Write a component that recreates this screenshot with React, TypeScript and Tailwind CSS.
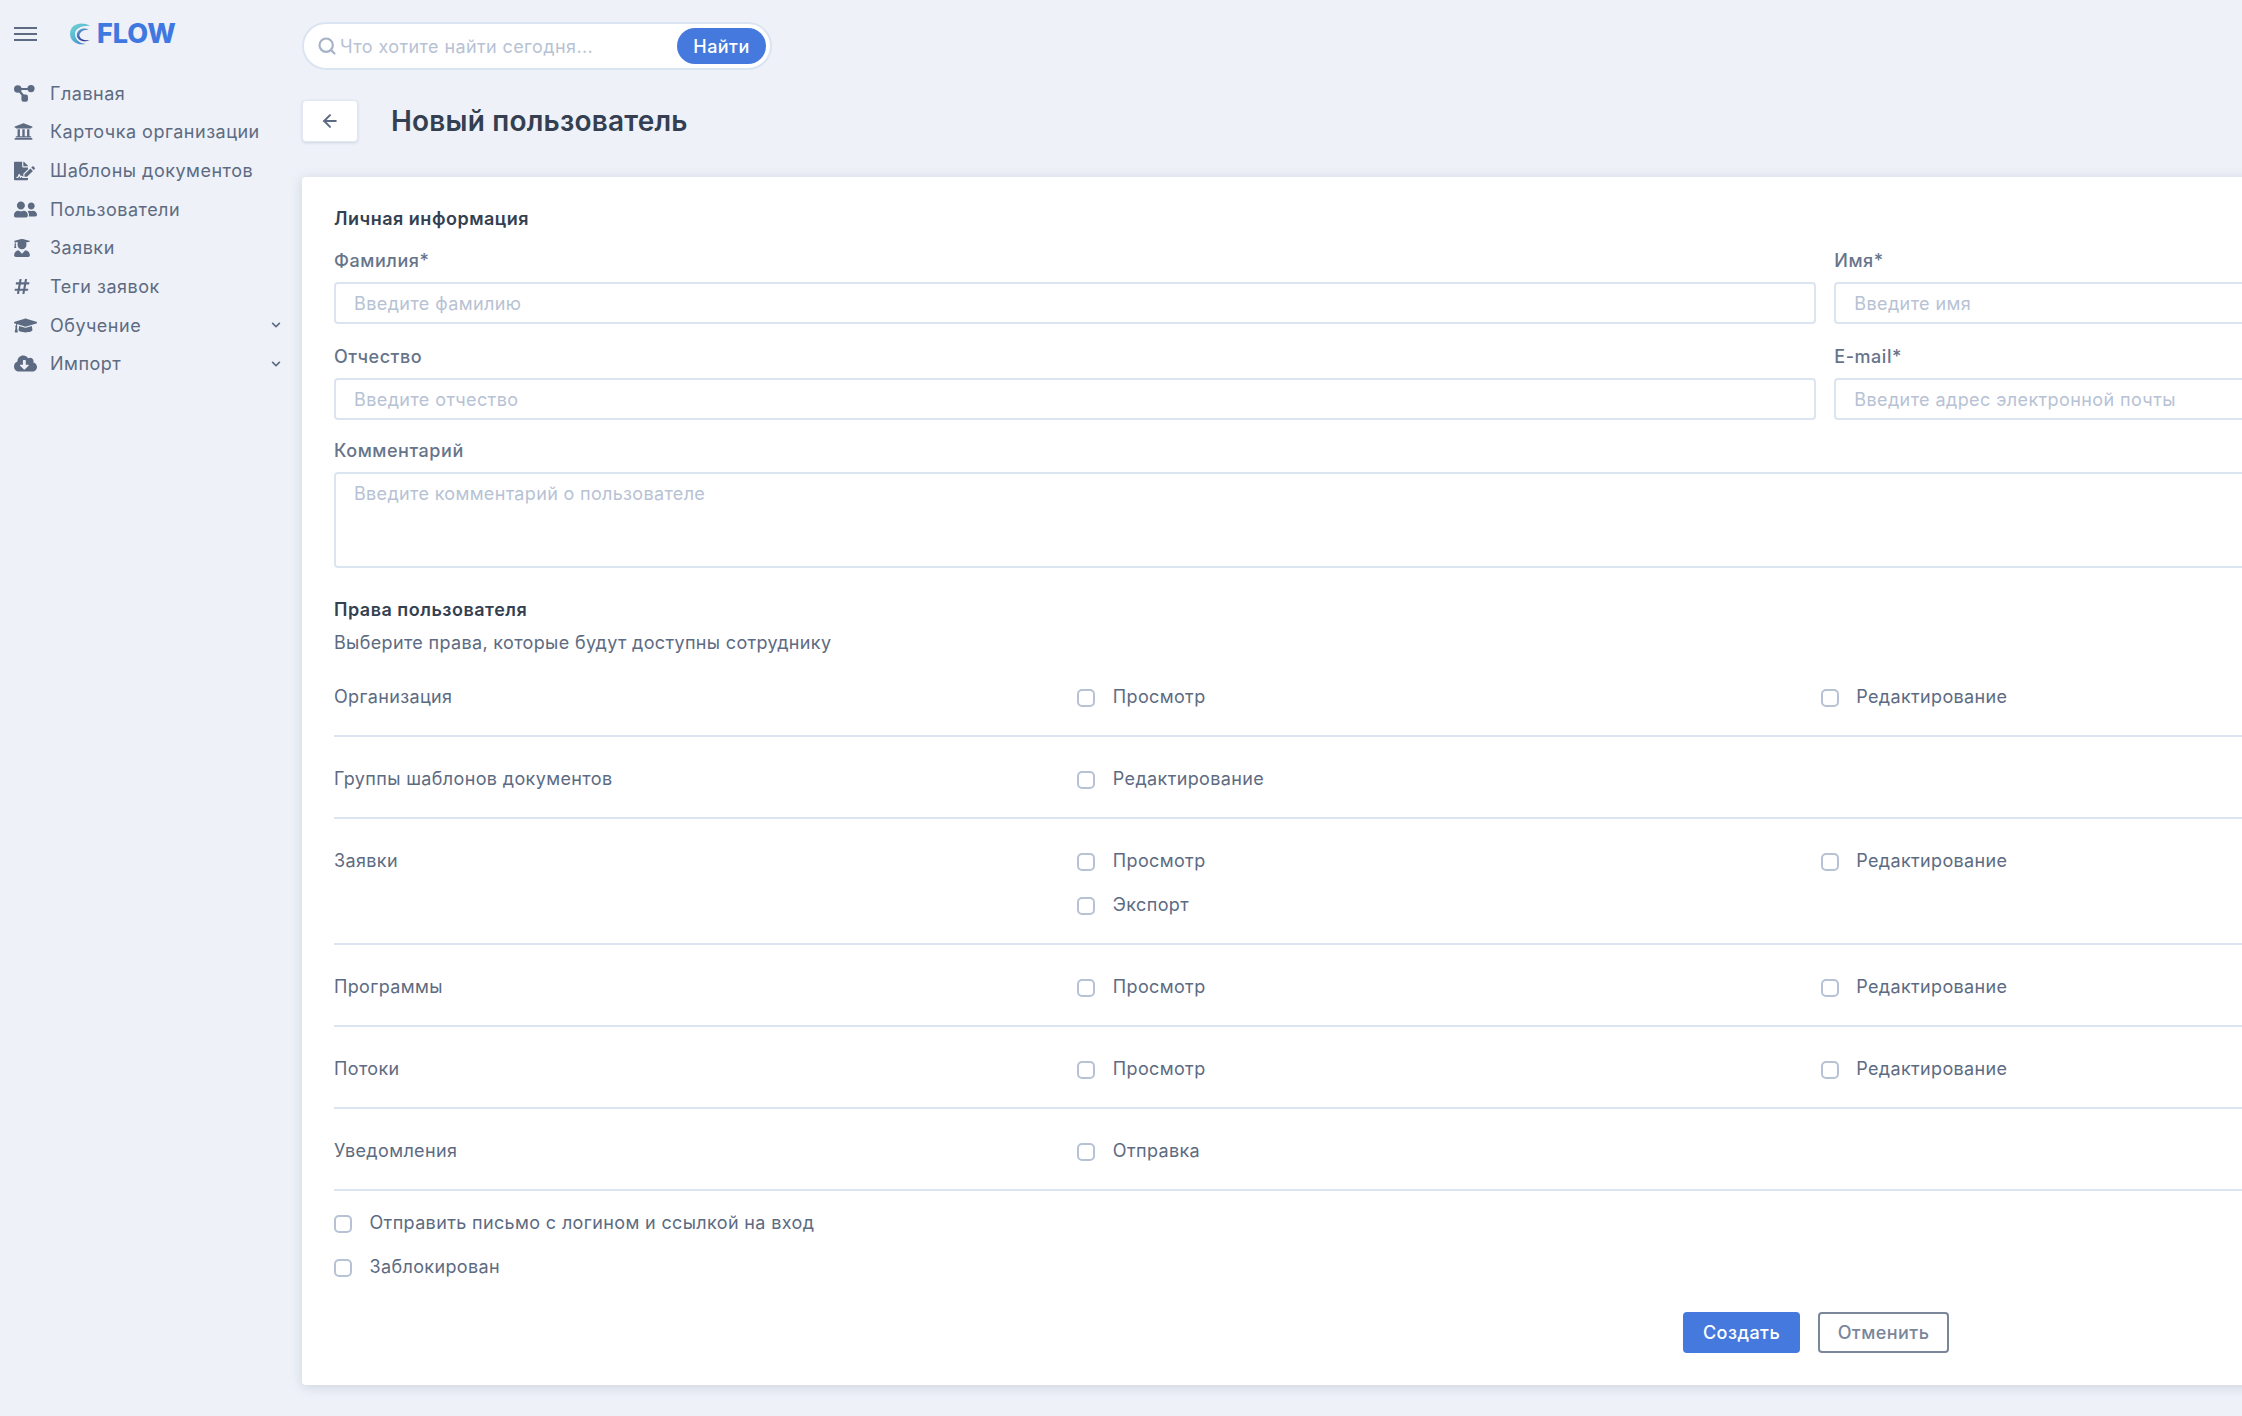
import { ReactNode } from 'react'
import {
  FaUniversity,
  FaFileSignature,
  FaUserFriends,
  FaUserGraduate,
  FaHashtag,
  FaGraduationCap,
  FaCloudDownloadAlt,
  FaChevronDown,
} from 'react-icons/fa'
import { Search, ArrowLeft } from 'lucide-react'

const fontClass = "font-['Inter',sans-serif]"

function NodesIcon({ className }: { className?: string }) {
  return (
    <svg className={className} viewBox="0 0 21 17">
      <path d="M4 4H17M4 4L10.5 12.5" stroke="#5d6b82" strokeWidth="2.2" fill="none" />
      <circle cx="3.8" cy="4" r="3.8" />
      <circle cx="17" cy="3.6" r="3.6" />
      <rect x="7.4" y="9.6" width="6.6" height="7.2" rx="2.2" />
    </svg>
  )
}

const menu = [
  { label: 'Главная', Icon: NodesIcon, size: 'h-[17px] w-[21px]' },
  { label: 'Карточка организации', Icon: FaUniversity, size: 'h-[19px] w-[19px]' },
  { label: 'Шаблоны документов', Icon: FaFileSignature, size: 'h-[20px] w-[21px]' },
  { label: 'Пользователи', Icon: FaUserFriends, size: 'h-[19px] w-[23px]' },
  { label: 'Заявки', Icon: FaUserGraduate, size: 'h-[18px] w-[16px]' },
  { label: 'Теги заявок', Icon: FaHashtag, size: 'h-[17px] w-[16px]' },
  { label: 'Обучение', Icon: FaGraduationCap, size: 'h-[19px] w-[23px]', more: true },
  { label: 'Импорт', Icon: FaCloudDownloadAlt, size: 'h-[19px] w-[23px]', more: true },
]

const rights: { title: string; first: string[]; second?: string }[] = [
  { title: 'Организация', first: ['Просмотр'], second: 'Редактирование' },
  { title: 'Группы шаблонов документов', first: ['Редактирование'] },
  { title: 'Заявки', first: ['Просмотр', 'Экспорт'], second: 'Редактирование' },
  { title: 'Программы', first: ['Просмотр'], second: 'Редактирование' },
  { title: 'Потоки', first: ['Просмотр'], second: 'Редактирование' },
  { title: 'Уведомления', first: ['Отправка'] },
]

function Logo() {
  return (
    <div className="flex items-center gap-[7px]">
      <svg width="20" height="22" viewBox="0 0 20 22">
        <defs>
          <linearGradient id="swirl" x1="0" y1="0" x2="0.7" y2="1">
            <stop offset="0" stopColor="#74d6d2" />
            <stop offset="0.6" stopColor="#55b4d4" />
            <stop offset="1" stopColor="#3f7fc8" />
          </linearGradient>
          <linearGradient id="swirlInner" x1="0" y1="0" x2="0.6" y2="1">
            <stop offset="0" stopColor="#5fb4d6" />
            <stop offset="0.6" stopColor="#3c5fb4" />
            <stop offset="1" stopColor="#2a2a85" />
          </linearGradient>
        </defs>
        <path d="M20 2.8C12 -2 0 0.2 0 11C0 17.4 6.4 22.8 15.5 21C9 20.6 4.6 15.6 5 10.4C5.4 5.4 12 2 20 2.8Z" fill="url(#swirl)" />
        <path d="M18.5 6.4C13 4 6.8 7 6.8 12.2C6.8 16.6 13.4 20.4 20 17C15 18.2 9.4 15.8 9.4 12.2C9.4 9.2 13.5 6.4 18.5 6.4Z" fill="url(#swirlInner)" />
      </svg>
      <span className="text-[27px] leading-none font-extrabold text-[#3f78e0]">FLOW</span>
    </div>
  )
}

function Sidebar() {
  return (
    <aside className="w-[302px] shrink-0 pr-[21px] pl-[14px]">
      <div className="flex h-[74px] items-center pb-[7px]">
        <div className="flex w-[23px] flex-col gap-[4px]">
          <div className="h-[2px] bg-[#5d6b82]" />
          <div className="h-[2px] bg-[#5d6b82]" />
          <div className="h-[2px] bg-[#5d6b82]" />
        </div>
        <div className="ml-[33px]">
          <Logo />
        </div>
      </div>
      <ul role="list" className="flex flex-col">
        {menu.map(({ label, Icon, size, more }) => (
          <li key={label} className="flex h-[38.65px] items-center text-[18px] tracking-[0.5px] text-[#5d6b82]">
            <span className="flex w-[36px] shrink-0 items-center">
              <Icon className={`${size} fill-[#5d6b82]`} />
            </span>
            <span>{label}</span>
            {more && <FaChevronDown className="ml-auto h-[10px] w-[10px] fill-[#5d6b82]" />}
          </li>
        ))}
      </ul>
    </aside>
  )
}

function Field({ label, placeholder }: { label: string; placeholder: string }) {
  return (
    <div>
      <div className="mb-[9px] h-[24px] text-[18px] leading-[24px] font-medium tracking-[0.55px] text-[#66748a]">{label}</div>
      <div className="flex h-[42px] items-center rounded-[4px] border-2 border-[#dbe4f1] bg-white px-[18px] text-[18px] tracking-[0.4px] text-[#b7c2d4]">
        {placeholder}
      </div>
    </div>
  )
}

function Check({ children }: { children: ReactNode }) {
  return (
    <div className="flex h-[26px] items-start text-[18px] leading-[25px] tracking-[0.36px] text-[#5d6b82]">
      <span className="mt-[5px] mr-[17.5px] h-[18px] w-[18px] shrink-0 rounded-[5px] border-2 border-[#b7c2d4] bg-white" />
      {children}
    </div>
  )
}

function RightsRow({ title, first, second }: { title: string; first: string[]; second?: string }) {
  return (
    <div className="grid w-[2230px] grid-cols-3 border-b-2 border-[#dbe4f1] pt-[29px] pb-[25px]">
      <div className="h-[26px] text-[18px] leading-[26px] tracking-[0.36px] text-[#5d6b82]">{title}</div>
      <div className="flex flex-col gap-[18px]">
        {first.map(item => (
          <Check key={item}>{item}</Check>
        ))}
      </div>
      <div>{second && <Check>{second}</Check>}</div>
    </div>
  )
}

export default function App() {
  return (
    <div className={`flex h-[1416px] w-[2242px] overflow-hidden bg-[#eef1f8] ${fontClass}`}>
      <Sidebar />
      <main className="min-w-0 flex-1">
        <div className="pt-[22px]">
          <div className="flex h-[48px] w-[470px] items-center rounded-full border-2 border-[#dbe4f1] bg-white pr-[4px] pl-[13px]">
            <Search className="h-[20px] w-[20px] shrink-0 text-[#a6b2c6]" strokeWidth={2.6} />
            <span className="ml-[3px] flex-1 text-[18px] tracking-[0.4px] text-[#b7c2d4]">Что хотите найти сегодня...</span>
            <button className="h-[36px] w-[89px] rounded-full bg-[#4679dd] text-[18px] font-medium tracking-[0.45px] text-white">Найти</button>
          </div>
        </div>
        <div className="mt-[30px] flex items-center">
          <button className="flex h-[42px] w-[56px] items-center justify-center rounded-[4px] border border-[#e2e8f2] bg-white shadow-[0_1px_3px_rgba(90,105,130,0.2)]">
            <ArrowLeft className="h-[20px] w-[20px] text-[#5d6b82]" strokeWidth={2.4} />
          </button>
          <h1 className="ml-[33px] text-[28px] font-semibold tracking-[0.2px] text-[#343f52]">Новый пользователь</h1>
        </div>
        <section className="mt-[35px] h-[1208px] w-[3012px] rounded-[4px] bg-white px-[32px] pt-[29px] shadow-[0_2px_12px_rgba(90,105,130,0.22)]">
          <h2 className="h-[26px] text-[18px] leading-[26px] font-semibold tracking-[0.5px] text-[#343f52]">Личная информация</h2>
          <div className="mt-[17px] grid w-[2982px] grid-cols-2 gap-x-[18.5px] gap-y-[21px]">
            <Field label="Фамилия*" placeholder="Введите фамилию" />
            <Field label="Имя*" placeholder="Введите имя" />
            <Field label="Отчество" placeholder="Введите отчество" />
            <Field label="E-mail*" placeholder="Введите адрес электронной почты" />
          </div>
          <div className="mt-[19px] w-[2982px]">
            <div className="mb-[9px] h-[24px] text-[18px] leading-[24px] font-medium tracking-[0.55px] text-[#66748a]">Комментарий</div>
            <div className="h-[96px] rounded-[4px] border-2 border-[#dbe4f1] px-[18px] pt-[6px] text-[18px] tracking-[0.33px] text-[#b7c2d4]">
              Введите комментарий о пользователе
            </div>
          </div>
          <h2 className="mt-[29px] h-[26px] text-[18px] leading-[26px] font-semibold tracking-[0.5px] text-[#343f52]">Права пользователя</h2>
          <p className="mt-[7px] h-[26px] text-[18px] leading-[26px] tracking-[0.34px] text-[#5d6b82]">
            Выберите права, которые будут доступны сотруднику
          </p>
          <div className="mt-[-1px]">
            {rights.map(row => (
              <RightsRow key={row.title} {...row} />
            ))}
          </div>
          <div className="mt-[19px] flex flex-col gap-[18px]">
            <Check>Отправить письмо с логином и ссылкой на вход</Check>
            <Check>Заблокирован</Check>
          </div>
          <div className="mt-[32px] flex w-[1615px] justify-end gap-[18px]">
            <button className="h-[41px] w-[117px] rounded-[4px] bg-[#4679dd] text-[18px] font-medium tracking-[0.45px] text-white">Создать</button>
            <button className="h-[41px] w-[131px] rounded-[4px] border-2 border-[#7a869a] bg-white text-[18px] font-medium tracking-[0.45px] text-[#7a869a]">Отменить</button>
          </div>
        </section>
      </main>
    </div>
  )
}
